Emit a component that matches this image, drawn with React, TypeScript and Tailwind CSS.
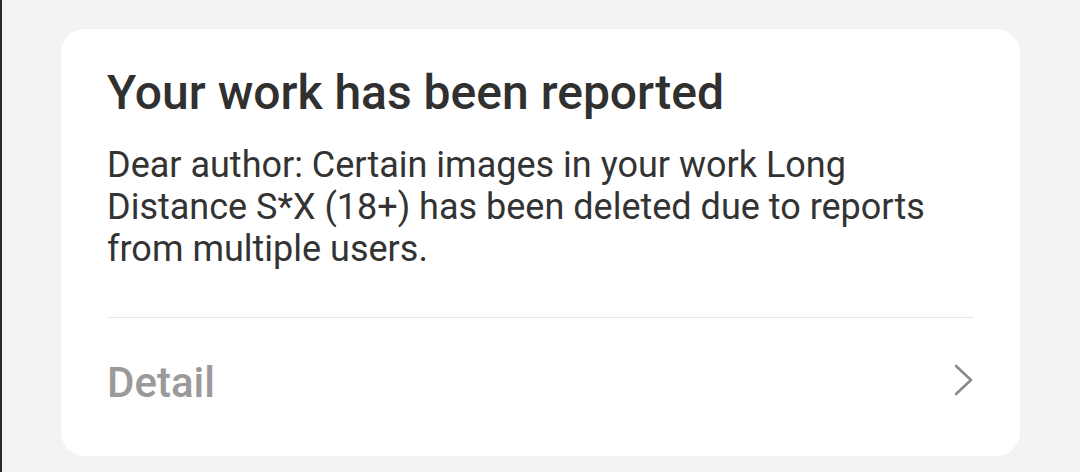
export default function App() {
  return (
    <div className="h-[472px] w-[1080px] border-l-2 border-[#2a2a2a] bg-[#f3f3f3] pl-[59px] pr-[60px] pt-[29px] font-['Roboto',sans-serif]">
      <div className="rounded-[24px] bg-white px-[46px] pb-[48px] pt-[36px]">
        <h1 className="text-[48px] font-medium leading-[56px] text-[#303030]">
          Your work has been reported
        </h1>
        <p className="mt-[23px] text-[36px] leading-[42px] text-[#333333]">
          Dear author: Certain images in your work Long Distance S*X (18+) has
          been deleted due to reports from multiple users.
        </p>
        <div className="mt-[47px] h-px bg-[#e6e6e6]" />
        <div className="mt-[40px] flex items-center justify-between">
          <span className="text-[42px] font-medium leading-[50px] text-[#9a9a9a]">Detail</span>
          <svg width="22" height="34" viewBox="0 0 22 34" className="-mt-[6px] -mr-[1px]">
            <path d="M3 3 L18 17 L3 31" fill="none" stroke="#8a8a8a" strokeWidth="2.6" strokeLinecap="round" strokeLinejoin="round" />
          </svg>
        </div>
      </div>
    </div>
  );
}
